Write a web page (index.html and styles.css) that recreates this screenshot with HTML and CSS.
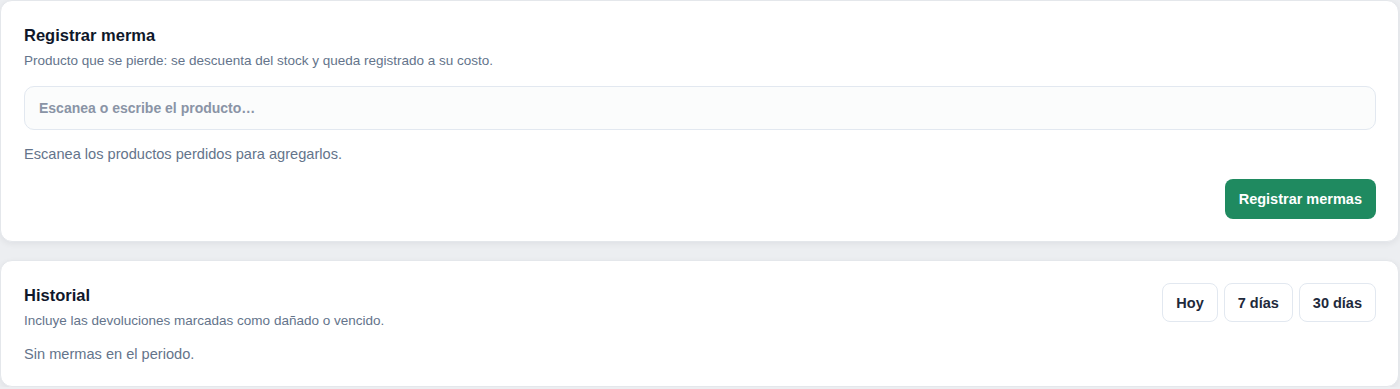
FILE: index.html
```html
<!DOCTYPE html>
<html lang="es">
<head>
    <meta charset="UTF-8">
    <meta name="viewport" content="width=device-width, initial-scale=1.0">
    <title>Mermas</title>
    <link rel="stylesheet" href="styles.css">
</head>
<body>

    <!-- Registro de merma -->
    <section class="card">
        <h2 class="card-title">Registrar merma</h2>
        <p class="card-sub">Producto que se pierde: se descuenta del stock y queda registrado a su costo.</p>
        <input class="scan-input" type="text" placeholder="Escanea o escribe el producto…">
        <p class="hint">Escanea los productos perdidos para agregarlos.</p>
        <div class="actions">
            <button class="btn-primary">Registrar mermas</button>
        </div>
    </section>

    <!-- Historial -->
    <section class="card">
        <div class="card-head">
            <div>
                <h2 class="card-title">Historial</h2>
                <p class="card-sub">Incluye las devoluciones marcadas como dañado o vencido.</p>
            </div>
            <div class="range">
                <button class="btn-range">Hoy</button>
                <button class="btn-range">7 días</button>
                <button class="btn-range">30 días</button>
            </div>
        </div>
        <p class="hint empty">Sin mermas en el periodo.</p>
    </section>

</body>
</html>
```

FILE: styles.css
```css
/* Estilos generales */
html, body {
    margin: 0;
    padding: 0;
}

body {
    background-color: #eceef1;
    font-family: "Liberation Sans", Arial, sans-serif;
    color: #0f172a;
    padding: 0 1px 0 0;
    display: flex;
    flex-direction: column;
    gap: 18px;
}

/* Tarjetas */
.card {
    background-color: #ffffff;
    border: 1px solid #e4e7eb;
    border-radius: 12px;
    box-shadow: 0 2px 6px rgba(15, 23, 42, 0.06);
    padding: 22px 22px 22px 23px;
}

.card-title {
    margin: 0;
    font-size: 16.5px;
    line-height: 24px;
    font-weight: bold;
    color: #0f172a;
}

.card-sub {
    margin: 4px 0 0;
    font-size: 13.5px;
    line-height: 20px;
    color: #64748b;
}

.scan-input {
    display: block;
    box-sizing: border-box;
    width: 100%;
    height: 44px;
    margin-top: 15px;
    padding: 0 14px;
    border: 1px solid #e2e8f0;
    border-radius: 10px;
    background-color: #fbfcfc;
    font-family: inherit;
    font-size: 14px;
    font-weight: bold;
    color: #0f172a;
    outline: none;
}

.scan-input::placeholder {
    color: #8a94a6;
}

.hint {
    margin: 14px 0 0;
    font-size: 14.6px;
    line-height: 20px;
    color: #64748b;
}

.actions {
    display: flex;
    justify-content: flex-end;
    margin-top: 15px;
}

.btn-primary {
    height: 40px;
    padding: 0 14px;
    border: none;
    border-radius: 8px;
    background-color: #1f8a60;
    color: #ffffff;
    font-family: inherit;
    font-size: 14.5px;
    font-weight: bold;
    cursor: pointer;
}

/* Historial */
.card-head {
    display: flex;
    justify-content: space-between;
    align-items: flex-start;
}

.range {
    display: flex;
    gap: 6px;
}

.btn-range {
    height: 39px;
    padding: 0 13px;
    border: 1px solid #e2e8f0;
    border-radius: 8px;
    background-color: #ffffff;
    color: #1e293b;
    font-family: inherit;
    font-size: 14.5px;
    font-weight: bold;
    cursor: pointer;
}

.empty {
    margin-top: 13px;
}
```
